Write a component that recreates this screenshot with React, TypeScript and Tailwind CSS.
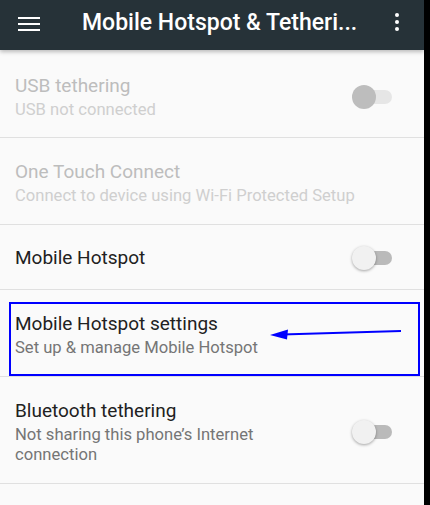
import { ReactNode } from "react";

function Toggle({ disabled }: { disabled?: boolean }) {
  return (
    <div className="relative w-[40px] h-[26px] shrink-0 flex items-center">
      <div
        className={`absolute left-[8px] right-0 h-[14px] rounded-full ${
          disabled ? "bg-[#e6e6e6]" : "bg-[#bababa]"
        }`}
      />
      <div
        className={`absolute left-0 w-[24px] h-[24px] rounded-full ${
          disabled
            ? "bg-[#bdbdbd]"
            : "bg-[#f1f1f1] shadow-[0_1px_3px_rgba(0,0,0,0.35)]"
        }`}
      />
    </div>
  );
}

interface RowProps {
  title: string;
  subtitle?: ReactNode;
  disabled?: boolean;
  toggle?: boolean;
  pad?: string;
  children?: ReactNode;
}

function Row({ title, subtitle, disabled, toggle, pad, children }: RowProps) {
  return (
    <div
      className={`relative flex items-center border-b border-[#e0e0e0] pl-[15px] pr-[32px] ${
        pad ?? "pt-[21px] pb-[18px]"
      }`}
    >
      <div className="flex-1 min-w-0 pr-6">
        <div
          className={`text-[19px] leading-[26px] ${
            disabled ? "text-[#bdbdbd]" : "text-[#212121]"
          }`}
        >
          {title}
        </div>
        {subtitle && (
          <div
            className={`text-[16.6px] leading-[20px] mt-[1px] ${
              disabled ? "text-[#cfcfcf]" : "text-[#757575]"
            }`}
          >
            {subtitle}
          </div>
        )}
      </div>
      {toggle && <Toggle disabled={disabled} />}
      {children}
    </div>
  );
}

export default function App() {
  return (
    <div
      className="flex w-[430px] h-[505px] overflow-hidden bg-black"
      style={{ fontFamily: "Roboto, 'Noto Sans', sans-serif" }}
    >
      <div className="flex flex-col w-[424px] h-full bg-[#fafafa]">
        {/* Toolbar */}
        <div className="relative z-10 flex items-center h-[50px] shrink-0 bg-[#263238] shadow-[0_2px_4px_rgba(0,0,0,0.25)]">
          <div className="w-[82px] shrink-0 flex flex-col gap-[4px] pl-[18px] pb-[2px]">
            <span className="block w-[22px] h-[2px] bg-white" />
            <span className="block w-[22px] h-[2px] bg-white" />
            <span className="block w-[22px] h-[2px] bg-white" />
          </div>
          <h1 className="whitespace-nowrap text-white text-[23px] font-medium leading-[28px] pb-[4px]">
            Mobile Hotspot &amp; Tetheri...
          </h1>
          <div className="flex flex-col gap-[3px] ml-auto mr-[25px] pb-[6px]">
            <span className="block w-[4px] h-[4px] rounded-full bg-white" />
            <span className="block w-[4px] h-[4px] rounded-full bg-white" />
            <span className="block w-[4px] h-[4px] rounded-full bg-white" />
          </div>
        </div>

        {/* Settings list */}
        <div className="flex flex-col">
          <Row
            title="USB tethering"
            subtitle="USB not connected"
            disabled
            toggle
            pad="pt-[23px] pb-[17px]"
          />
          <Row
            title="One Touch Connect"
            subtitle="Connect to device using Wi-Fi Protected Setup"
            disabled
          />
          <Row title="Mobile Hotspot" toggle pad="pt-[20px] pb-[18px]" />
          <Row
            title="Mobile Hotspot settings"
            subtitle="Set up & manage Mobile Hotspot"
          >
            <div className="absolute top-[12px] bottom-[0px] left-[9px] right-[4px] border-2 border-[#0000ff] pointer-events-none" />
            <svg
              className="absolute left-[268px] top-[36px]"
              width="136"
              height="14"
              viewBox="0 0 136 14"
            >
              <line
                x1="133"
                y1="5"
                x2="14"
                y2="8.5"
                stroke="#0000ff"
                strokeWidth="2"
              />
              <polygon points="2,9 20,3.5 19,13.5" fill="#0000ff" />
            </svg>
          </Row>
          <Row
            title="Bluetooth tethering"
            subtitle={
              <>
                Not sharing this phone’s Internet
                <br />
                connection
              </>
            }
            toggle
          />
        </div>
      </div>
      <div className="w-[6px] h-full bg-black" />
    </div>
  );
}
